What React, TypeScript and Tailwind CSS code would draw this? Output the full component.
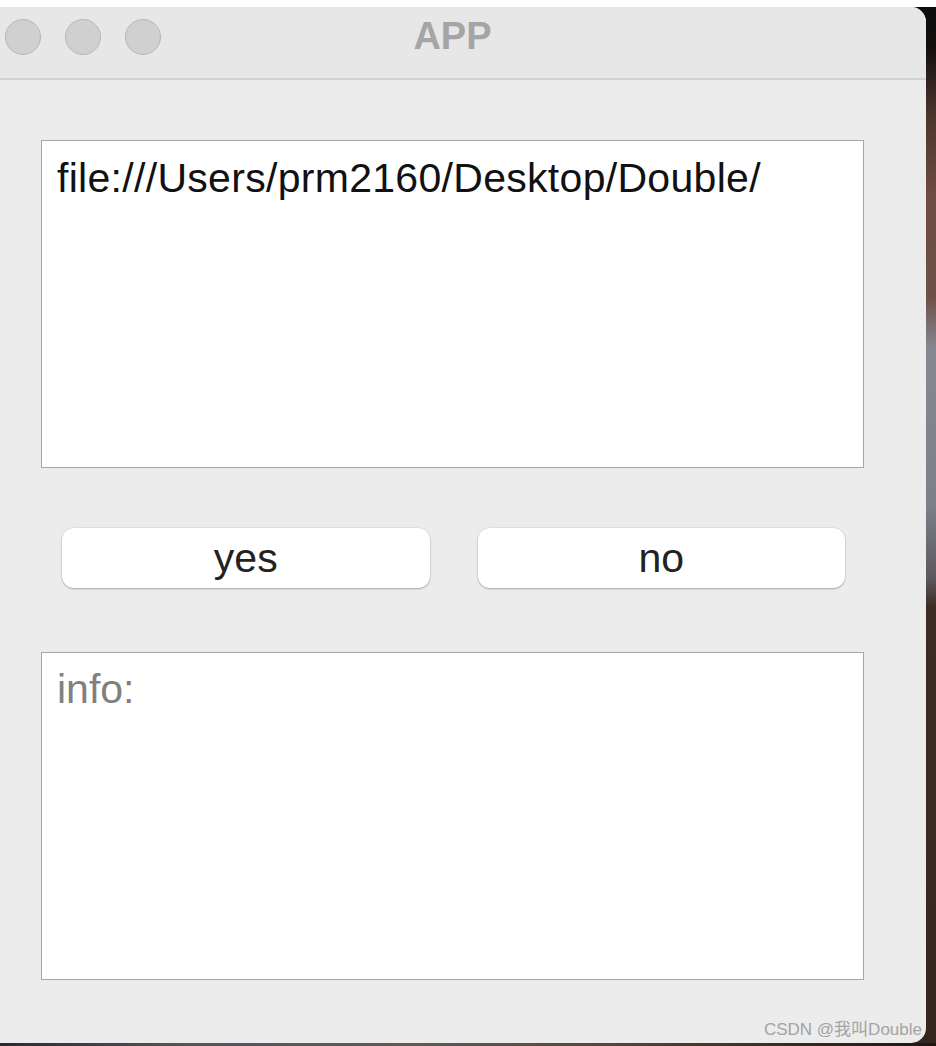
import React from 'react';

const sans = "font-['Liberation_Sans','Helvetica_Neue',Arial,sans-serif]";

function TrafficLight() {
  return <div className="h-[36px] w-[36px] rounded-full border-[1.5px] border-[#b7b7b7] bg-[#d0d0d0]" />;
}

function ActionButton({ label }: { label: string }) {
  return (
    <button className="flex h-[60px] flex-1 items-center justify-center rounded-[12px] bg-white text-[41px] leading-none text-[#222222] shadow-[0_1px_2px_rgba(0,0,0,0.28),0_0_0_0.5px_rgba(0,0,0,0.08)]">
      {label}
    </button>
  );
}

export default function App() {
  return (
    <div className={`flex h-[1046px] w-[936px] flex-col overflow-hidden bg-[#3a2a22] ${sans}`}>
      <div className="h-[7px] shrink-0 bg-white" />

      <div className="flex h-[1036px] shrink-0 bg-[linear-gradient(180deg,#0c0c0c_0%,#141010_4%,#4a332b_10%,#6d4c41_18%,#6e5048_28%,#858893_33%,#7c808b_48%,#5d5a5e_55%,#3d2c23_58%,#3b2a21_80%,#34251d_100%)]">
        <div className="relative -ml-[21px] flex w-[947px] shrink-0 flex-col overflow-hidden rounded-tr-[15px] rounded-br-[15px] bg-[#ececec]">
          {/* title bar */}
          <div className="relative flex h-[73px] shrink-0 items-start border-b-2 border-[#d2d2d2] bg-[#e7e7e7]">
            <div className="flex gap-[24px] pl-[26px] pt-[12px]">
              <TrafficLight />
              <TrafficLight />
              <TrafficLight />
            </div>
            <div className="absolute inset-x-0 top-[10px] text-center text-[38px] font-bold leading-none text-[#a5a5a5]">
              APP
            </div>
          </div>

          {/* content */}
          <div className="flex flex-col px-[62px] pt-[60px]">
            <div className="h-[328px] border border-[#a6a6a6] bg-white px-[15px] pt-[17px] text-[41px] leading-none tracking-[0.3px] text-[#111111]">
              file:///Users/prm2160/Desktop/Double/
            </div>

            <div className="mt-[60px] flex gap-[48px] pl-[21px] pr-[19px]">
              <ActionButton label="yes" />
              <ActionButton label="no" />
            </div>

            <div className="mt-[64px] h-[328px] border border-[#a6a6a6] bg-white px-[15px] pt-[16px] text-[41px] leading-none text-[#808080]">
              info:
            </div>
          </div>

          <div className="absolute bottom-[5px] right-[4px] font-['Liberation_Sans','Noto_Sans_CJK_SC',sans-serif] text-[17px] leading-none text-[#a3a3a3]">
            CSDN @我叫Double
          </div>
        </div>
        <div className="flex-1" />
      </div>

      <div className="flex-1 bg-[linear-gradient(90deg,#2a2a2e_0%,#55565c_20%,#5e5a58_45%,#5a4438_65%,#3a2820_85%,#1e1612_100%)]" />
    </div>
  );
}
